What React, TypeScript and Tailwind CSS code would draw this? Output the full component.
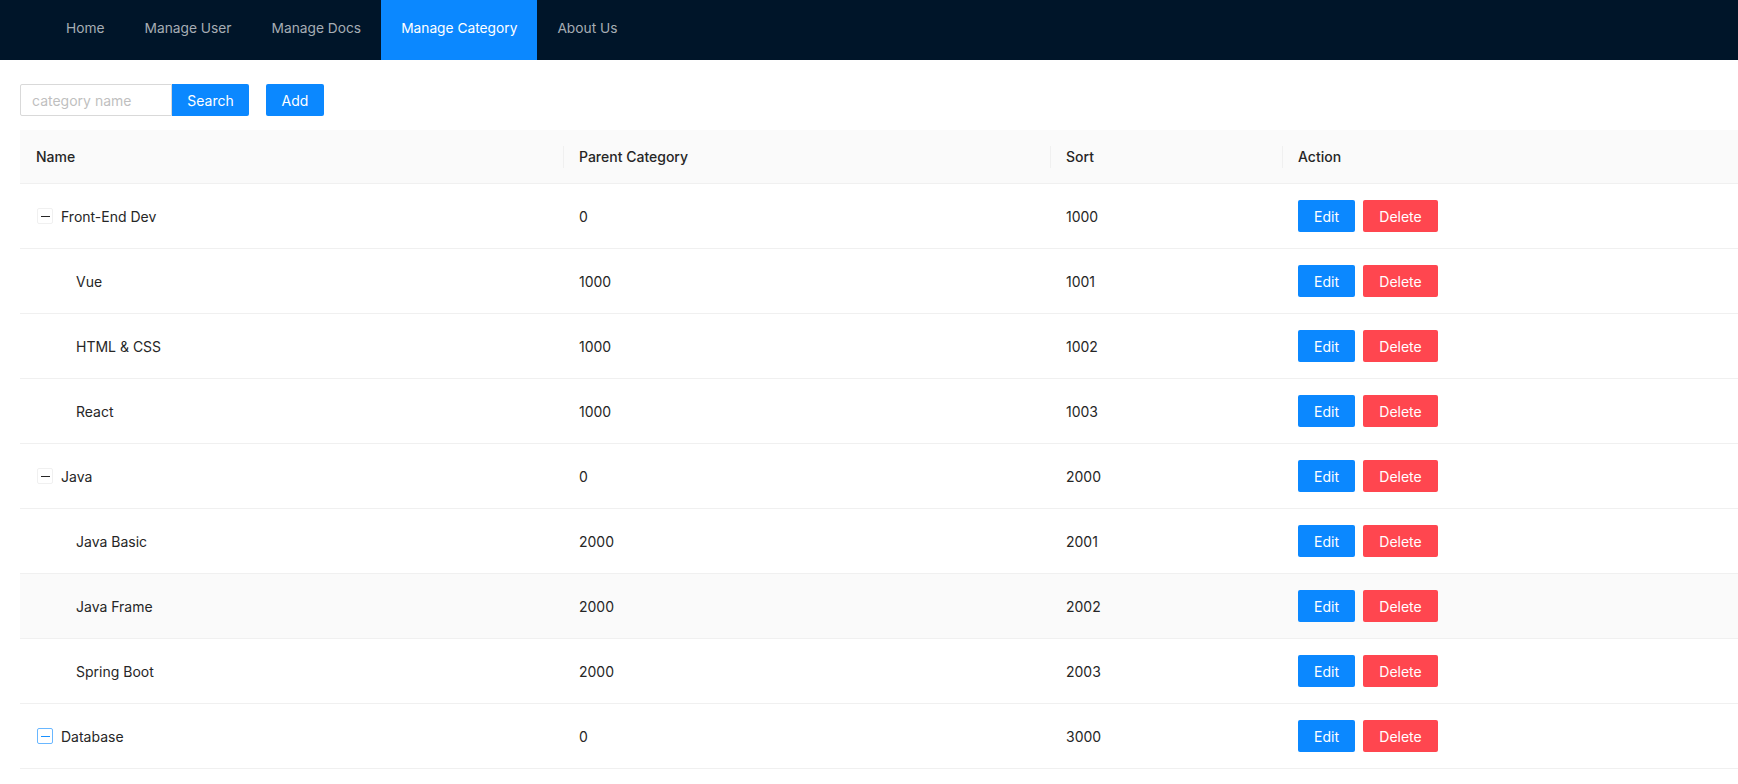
import { useState } from "react";

type Row = { name: string; parent: string; sort: string; level: number; hover?: boolean; focus?: boolean };

const rows: Row[] = [
  { name: "Front-End Dev", parent: "0", sort: "1000", level: 0 },
  { name: "Vue", parent: "1000", sort: "1001", level: 1 },
  { name: "HTML & CSS", parent: "1000", sort: "1002", level: 1 },
  { name: "React", parent: "1000", sort: "1003", level: 1 },
  { name: "Java", parent: "0", sort: "2000", level: 0 },
  { name: "Java Basic", parent: "2000", sort: "2001", level: 1 },
  { name: "Java Frame", parent: "2000", sort: "2002", level: 1, hover: true },
  { name: "Spring Boot", parent: "2000", sort: "2003", level: 1 },
  { name: "Database", parent: "0", sort: "3000", level: 0, focus: true },
];

const menu = ["Home", "Manage User", "Manage Docs", "Manage Category", "About Us"];

function ExpandIcon({ focus }: { focus?: boolean }) {
  return (
    <span
      className={
        "mr-2 flex h-4 w-4 items-center justify-center rounded-[2px] border " +
        (focus ? "border-[#69b7ff]" : "border-[#f0f0f0]")
      }
    >
      <span className={"h-px w-[9px] " + (focus ? "bg-[#1890ff]" : "bg-[#262626]")} />
    </span>
  );
}

export default function App() {
  const [query, setQuery] = useState("");

  return (
    <div className="min-h-screen bg-white font-['Inter','Liberation_Sans',sans-serif] text-[14px] text-[#262626]">
      <header className="flex h-[60px] bg-[#001529] pl-[46px]">
        {menu.map((item) => (
          <a
            key={item}
            href="#"
            className={
              "flex items-center px-5 pb-1 text-[13.75px] " +
              (item === "Manage Category" ? "bg-[#0b88ff] text-white" : "text-[#a6adb4]")
            }
          >
            {item}
          </a>
        ))}
      </header>

      <main className="pl-5">
        <div className="flex items-center pt-6">
          <input
            value={query}
            onChange={(e) => setQuery(e.target.value)}
            placeholder="category name"
            className="h-8 w-[152px] rounded-l-[2px] border border-[#d9d9d9] px-[11px] text-[14px] outline-none placeholder:text-[#bfbfbf]"
          />
          <button className="h-8 w-[77px] rounded-r-[2px] bg-[#0b88ff] text-[14px] text-white">Search</button>
          <button className="ml-[17px] h-8 w-[58px] rounded-[2px] bg-[#0b88ff] text-[14px] text-white">Add</button>
        </div>

        <div className="mt-[14px]">
          <div className="grid h-[54px] grid-cols-[543px_487px_232px_1fr] border-b border-[#f0f0f0] bg-[#fafafa] font-medium">
            {["Name", "Parent Category", "Sort", "Action"].map((h, i) => (
              <div key={h} className="relative flex items-center px-4">
                {i > 0 && <span className="absolute left-0 top-1/2 h-[22px] w-px -translate-y-1/2 bg-[#f0f0f0]" />}
                {h}
              </div>
            ))}
          </div>

          {rows.map((r) => (
            <div
              key={r.name}
              className={
                "grid h-[65px] grid-cols-[543px_487px_232px_1fr] border-b border-[#f0f0f0] " +
                (r.hover ? "bg-[#fafafa]" : "bg-white")
              }
            >
              <div className={"flex items-center " + (r.level ? "pl-[56px]" : "pl-[17px]")}>
                {r.level === 0 && <ExpandIcon focus={r.focus} />}
                {r.name}
              </div>
              <div className="flex items-center px-4">{r.parent}</div>
              <div className="flex items-center px-4">{r.sort}</div>
              <div className="flex items-center gap-2 px-4">
                <button className="h-8 w-[57px] rounded-[2px] bg-[#0b88ff] text-white">Edit</button>
                <button className="h-8 w-[75px] rounded-[2px] bg-[#ff464f] text-white">Delete</button>
              </div>
            </div>
          ))}
        </div>
      </main>
    </div>
  );
}
